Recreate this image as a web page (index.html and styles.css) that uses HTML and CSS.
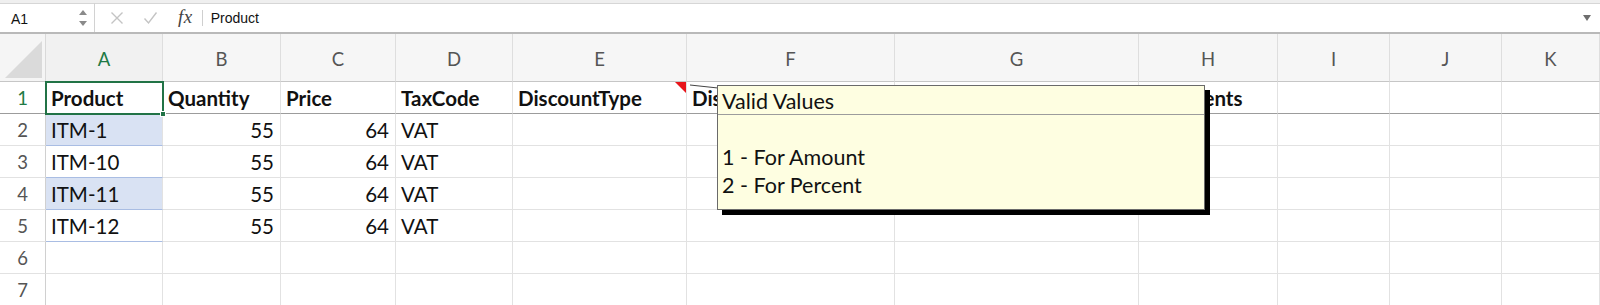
FILE: index.html
```html
<!DOCTYPE html>
<html>
<head>
<meta charset="utf-8">
<link rel="stylesheet" href="styles.css">
</head>
<body>
<div class="app">
  <div class="formula-bar">
    <div class="name-box">
      <span class="name-text">A1</span>
      <svg class="stepper" width="10" height="18" viewBox="0 0 10 18"><path d="M1 6 L5 1 L9 6 Z" fill="#8a8a8a"/><path d="M1 12 L5 17 L9 12 Z" fill="#8a8a8a"/></svg>
    </div>
    <div class="fx-tools">
      <svg class="tool-icon" width="14" height="14" viewBox="0 0 14 14"><path d="M1.5 1.5 L12.5 12.5 M12.5 1.5 L1.5 12.5" stroke="#c4c4c4" stroke-width="1.4" fill="none"/></svg>
      <svg class="tool-icon" width="15" height="14" viewBox="0 0 15 14"><path d="M1.5 7.5 L5.5 12 L13.5 1.5" stroke="#c4c4c4" stroke-width="1.4" fill="none"/></svg>
      <span class="fx">fx</span>
      <span class="sep"></span>
    </div>
    <div class="formula-text">Product</div>
    <svg class="dropdown" width="8" height="6" viewBox="0 0 8 6"><path d="M0 0 L8 0 L4 6 Z" fill="#6e6e6e"/></svg>
  </div>

  <div class="sheet">
    <div class="corner"><svg width="44" height="44" viewBox="0 0 44 44"><path d="M4 41 L41 41 L41 4 Z" fill="#dadada"/></svg></div>
    <div class="col-head active">A</div>
    <div class="col-head">B</div>
    <div class="col-head">C</div>
    <div class="col-head">D</div>
    <div class="col-head">E</div>
    <div class="col-head">F</div>
    <div class="col-head">G</div>
    <div class="col-head">H</div>
    <div class="col-head">I</div>
    <div class="col-head">J</div>
    <div class="col-head">K</div>

    <div class="row-head active">1</div>
    <div class="cell bold frozen selected">Product<span class="handle"></span></div>
    <div class="cell bold frozen">Quantity</div>
    <div class="cell bold frozen">Price</div>
    <div class="cell bold frozen">TaxCode</div>
    <div class="cell bold frozen">DiscountType<span class="note-mark"></span></div>
    <div class="cell bold frozen">DiscountValue</div>
    <div class="cell bold frozen"></div>
    <div class="cell bold frozen">Comments</div>
    <div class="cell frozen"></div>
    <div class="cell frozen"></div>
    <div class="cell frozen"></div>

    <div class="row-head">2</div>
    <div class="cell band">ITM-1</div>
    <div class="cell num">55</div>
    <div class="cell num">64</div>
    <div class="cell">VAT</div>
    <div class="cell"></div><div class="cell"></div><div class="cell"></div><div class="cell"></div><div class="cell"></div><div class="cell"></div><div class="cell"></div>

    <div class="row-head">3</div>
    <div class="cell band-plain">ITM-10</div>
    <div class="cell num">55</div>
    <div class="cell num">64</div>
    <div class="cell">VAT</div>
    <div class="cell"></div><div class="cell"></div><div class="cell"></div><div class="cell"></div><div class="cell"></div><div class="cell"></div><div class="cell"></div>

    <div class="row-head">4</div>
    <div class="cell band">ITM-11</div>
    <div class="cell num">55</div>
    <div class="cell num">64</div>
    <div class="cell">VAT</div>
    <div class="cell"></div><div class="cell"></div><div class="cell"></div><div class="cell"></div><div class="cell"></div><div class="cell"></div><div class="cell"></div>

    <div class="row-head">5</div>
    <div class="cell band-plain">ITM-12</div>
    <div class="cell num">55</div>
    <div class="cell num">64</div>
    <div class="cell">VAT</div>
    <div class="cell"></div><div class="cell"></div><div class="cell"></div><div class="cell"></div><div class="cell"></div><div class="cell"></div><div class="cell"></div>

    <div class="row-head">6</div>
    <div class="cell"></div><div class="cell"></div><div class="cell"></div><div class="cell"></div><div class="cell"></div><div class="cell"></div><div class="cell"></div><div class="cell"></div><div class="cell"></div><div class="cell"></div><div class="cell"></div>

    <div class="row-head">7</div>
    <div class="cell"></div><div class="cell"></div><div class="cell"></div><div class="cell"></div><div class="cell"></div><div class="cell"></div><div class="cell"></div><div class="cell"></div><div class="cell"></div><div class="cell"></div><div class="cell"></div>
  </div>

  <svg class="connector" width="32" height="8" viewBox="0 0 32 8"><path d="M1 1 L29 4" stroke="#444" stroke-width="1" fill="none"/></svg>
  <div class="comment">
    <div class="comment-line">Valid Values</div>
    <div class="comment-line">&nbsp;</div>
    <div class="comment-line">1 - For Amount</div>
    <div class="comment-line">2 - For Percent</div>
    <span class="comment-rule"></span>
  </div>
</div>
</body>
</html>
```
FILE: styles.css
```css
* { box-sizing: border-box; }
html, body { margin: 0; padding: 0; background: #fff; }
body { width: 1600px; height: 305px; overflow: hidden; }
.app { position: relative; width: 1600px; height: 305px; overflow: hidden; }

.formula-bar {
  display: flex;
  align-items: center;
  height: 34px;
  border-top: 3px solid #efefef;
  border-bottom: 2px solid #b9b9b9;
  box-shadow: inset 0 1px 0 #d6d6d6;
  font-family: "Liberation Sans", Arial, sans-serif;
  font-size: 14px;
  color: #111;
}
.name-box {
  width: 95px;
  height: 100%;
  display: flex;
  align-items: center;
  justify-content: space-between;
  padding: 0 6px 0 11px;
  border-right: 1px solid #d2d2d2;
}
.name-text { font-size: 14px; padding-top: 2px; }
.stepper { display: block; }
.fx-tools {
  display: flex;
  align-items: center;
  height: 100%;
  padding-left: 15px;
}
.tool-icon { display: block; margin-right: 19px; }
.tool-icon + .tool-icon { margin-right: 20px; }
.fx {
  font-family: "Liberation Serif", "Times New Roman", serif;
  font-style: italic;
  font-size: 19px;
  color: #444;
  margin-top: -2px;
  letter-spacing: 0.5px;
}
.sep { width: 1px; height: 16px; background: #cfcfcf; margin-left: 9px; margin-right: 8px; }
.formula-text { flex: 1; padding-top: 1px; }
.dropdown { display: block; margin-right: 9px; }

.sheet {
  display: grid;
  grid-template-columns: 46px 117px 118px 115px 117px 174px 208px 244px 139px 112px 112px 98px;
  grid-template-rows: 48px repeat(7, 32px);
  font-family: Lato, "Liberation Sans", sans-serif;
}
.corner {
  background: #f5f5f5;
  border-right: 1px solid #d9d9d9;
  border-bottom: 1px solid #c6c6c6;
  display: flex;
  align-items: flex-end;
  justify-content: flex-end;
}
.corner svg { display: block; }
.col-head {
  background: #f6f6f6;
  border-right: 1px solid #dedede;
  border-bottom: 1px solid #c6c6c6;
  display: flex;
  align-items: center;
  justify-content: center;
  font-size: 18.5px;
  color: #555;
  padding-top: 2px;
}
.col-head.active { color: #1f7a45; background: #f1f1f1; }
.row-head {
  background: #fff;
  border-right: 1px solid #d0d0d0;
  border-bottom: 1px solid #e2e2e2;
  display: flex;
  align-items: center;
  justify-content: center;
  font-size: 18.5px;
  color: #555;
  padding-top: 1px;
}
.row-head.active { color: #1f7a45; border-bottom-color: #9c9c9c; }
.cell {
  position: relative;
  border-right: 1px solid #e2e2e2;
  border-bottom: 1px solid #e2e2e2;
  font-size: 20.5px;
  line-height: 31px;
  color: #111;
  padding: 1px 5px 0 5px;
  white-space: nowrap;
}
.cell.bold { font-weight: 700; }
.cell.frozen { border-bottom-color: #9c9c9c; }
.cell.num { text-align: right; padding-right: 6px; }
.cell.band { background: #d9e2f3; border-bottom-color: #a9bde3; }
.cell.band-plain { border-bottom-color: #a9bde3; }
.cell.selected {
  outline: 2px solid #217346;
  outline-offset: -1px;
  z-index: 2;
}
.handle {
  position: absolute;
  right: -4px;
  bottom: -4px;
  width: 6px;
  height: 6px;
  background: #217346;
  border: 1px solid #fff;
}
.note-mark {
  position: absolute;
  right: 0;
  top: 0;
  width: 0;
  height: 0;
  border-top: 11px solid #e8151b;
  border-left: 11px solid transparent;
}

.connector { position: absolute; left: 689px; top: 84px; }
.comment {
  position: absolute;
  left: 717px;
  top: 85px;
  width: 488px;
  height: 125px;
  background: #fefee1;
  border: 1px solid #6a6a6a;
  box-shadow: 5px 5px 0 #000;
  padding: 1px 0 0 4px;
  font-family: Lato, "Liberation Sans", sans-serif;
  font-size: 21.5px;
  line-height: 28px;
  color: #111;
  z-index: 5;
}
.comment-rule {
  position: absolute;
  left: 0;
  right: 0;
  top: 28px;
  height: 1px;
  background: #9c9c9c;
}
```
